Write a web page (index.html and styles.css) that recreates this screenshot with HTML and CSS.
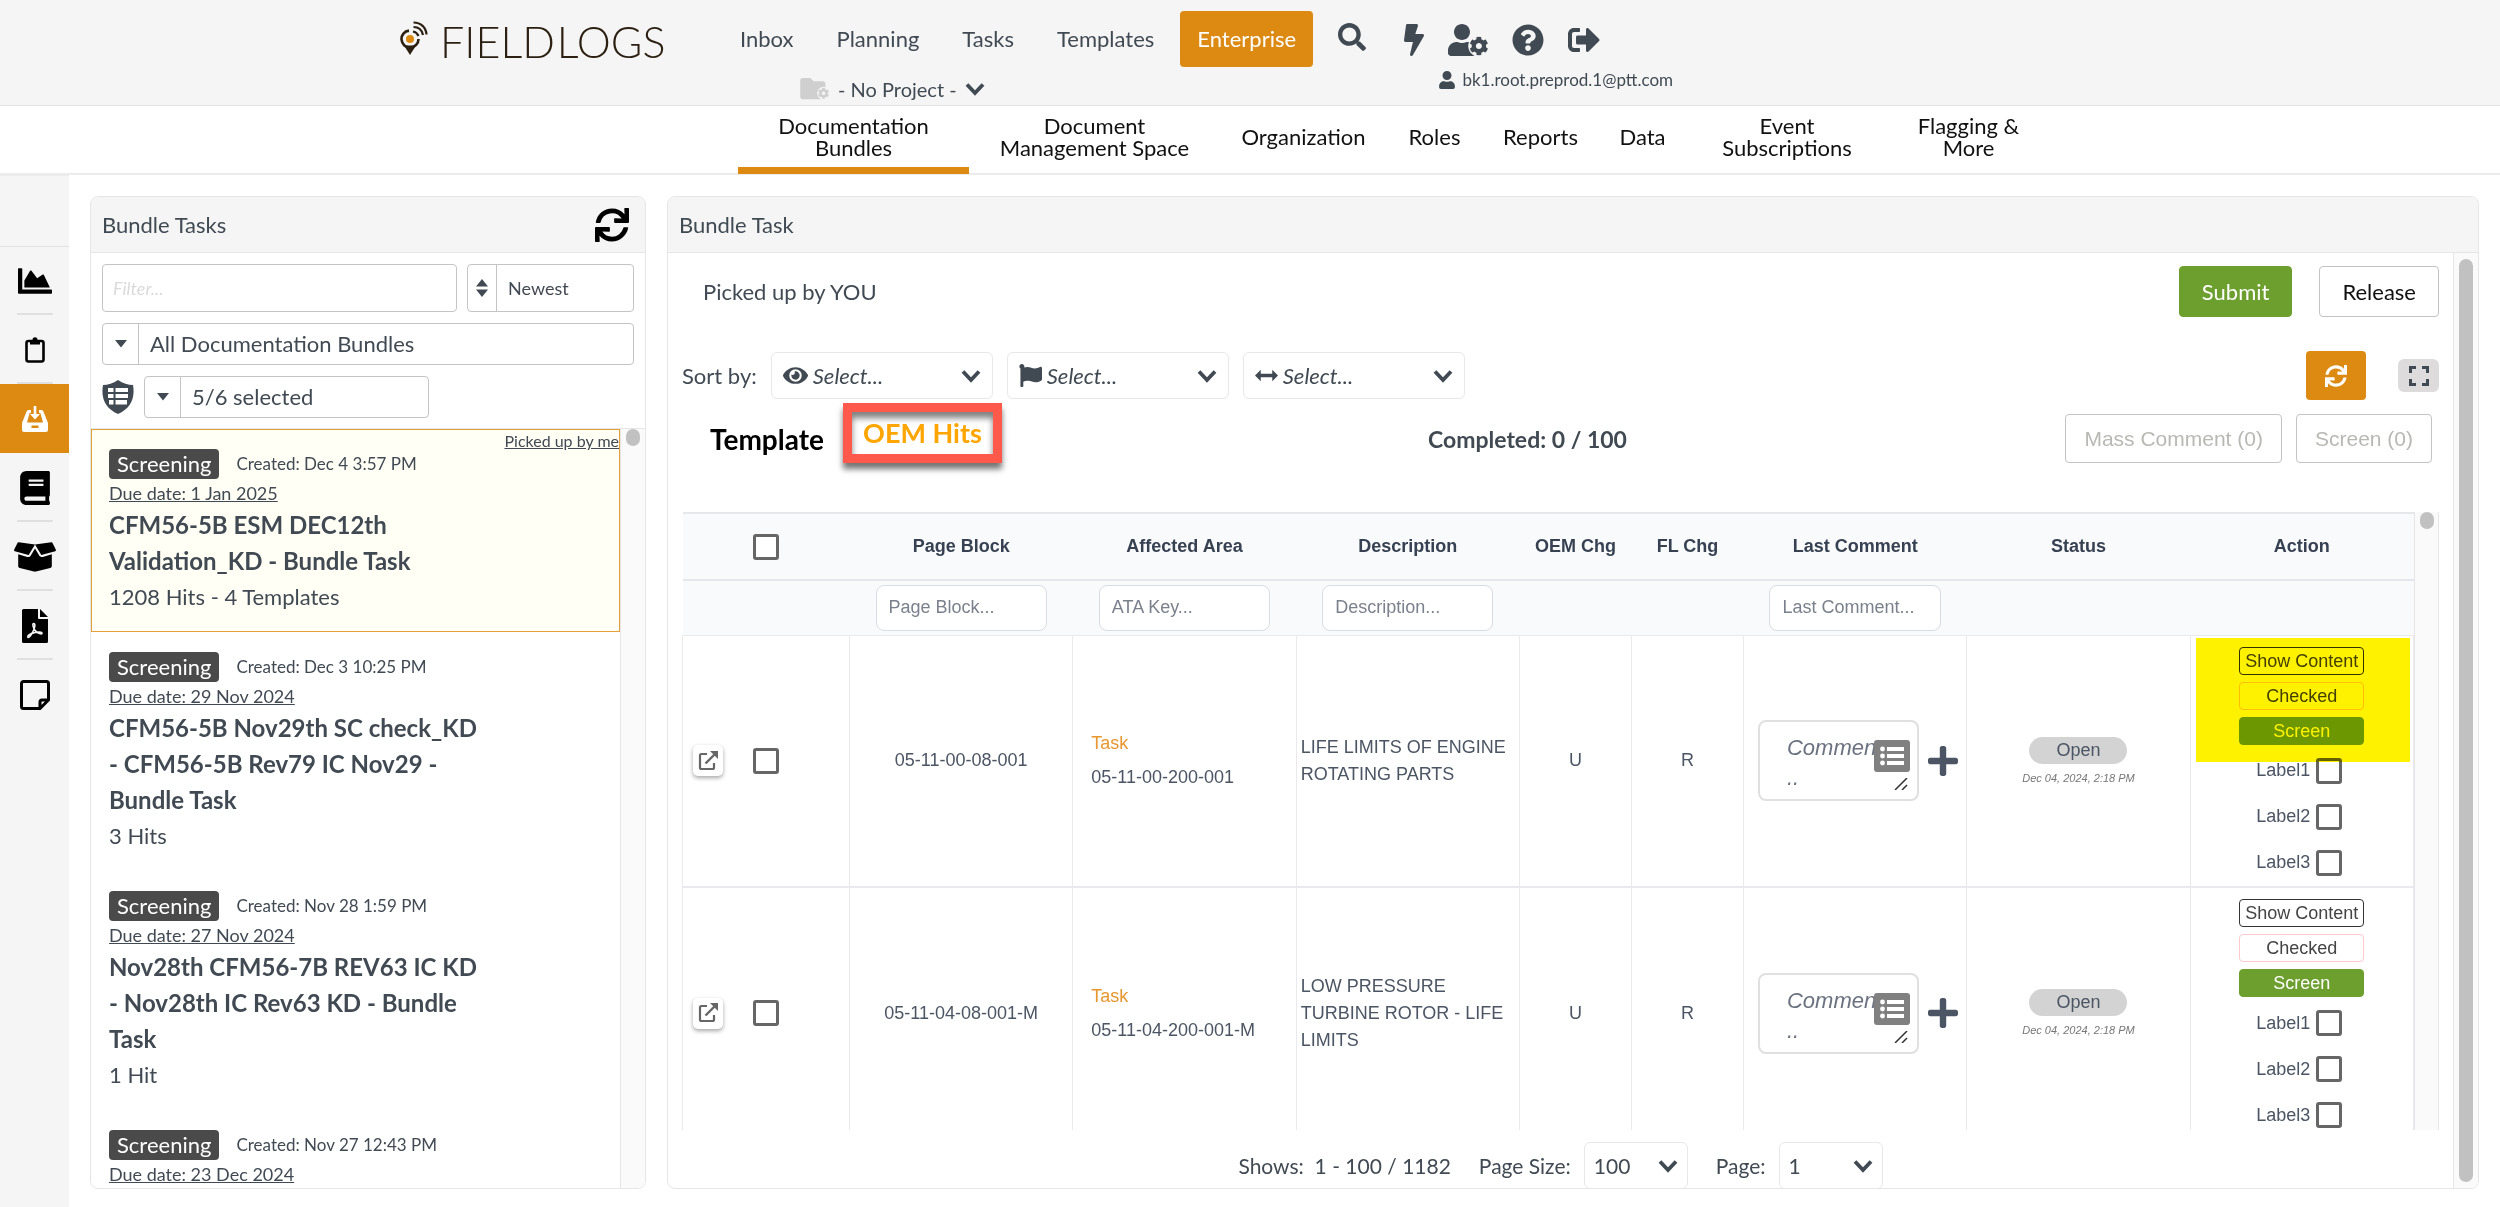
FILE: index.html
```html
<!DOCTYPE html>
<html lang="en">
<head>
    <meta charset="UTF-8">
    <meta name="viewport" content="width=device-width, initial-scale=1.0">
    <title>Field Logs - Documentation Bundles</title>
    <link rel="stylesheet" href="styles.css">
</head>
<body>
    <!-- Icon sprite -->
    <svg class="sprite" aria-hidden="true">
        <symbol id="i-search" viewBox="0 0 512 512"><path d="M505 442.7L405.3 343c-4.5-4.5-10.6-7-17-7H372c27.6-35.3 44-79.7 44-128C416 93.1 322.9 0 208 0S0 93.1 0 208s93.1 208 208 208c48.3 0 92.7-16.4 128-44v16.3c0 6.4 2.5 12.5 7 17l99.7 99.7c9.4 9.4 24.6 9.4 33.9 0l28.3-28.3c9.4-9.4 9.4-24.6.1-34zM208 336c-70.7 0-128-57.2-128-128 0-70.7 57.2-128 128-128 70.7 0 128 57.2 128 128 0 70.7-57.2 128-128 128z"/></symbol>
        <symbol id="i-bolt" viewBox="0 0 320 512"><path d="M296 160H180.6l42.6-129.8C227.2 15 215.7 0 200 0H56C44 0 33.8 8.9 32.2 20.8l-32 240C-1.7 275.2 9.5 288 24 288h118.7L96.6 482.5c-3.6 15.2 8 29.5 23.3 29.5 8.4 0 16.4-4.4 20.8-12l176-304c9.3-15.9-2.2-36-20.7-36z"/></symbol>
        <symbol id="i-user" viewBox="0 0 448 512"><path d="M224 256c70.7 0 128-57.3 128-128S294.7 0 224 0 96 57.3 96 128s57.3 128 128 128zm89.6 32h-16.7c-22.2 10.2-46.9 16-72.9 16s-50.6-5.8-72.9-16h-16.7C60.2 288 0 348.2 0 422.4V464c0 26.5 21.5 48 48 48h352c26.5 0 48-21.5 48-48v-41.6c0-74.2-60.2-134.4-134.4-134.4z"/></symbol>
        <symbol id="i-cog" viewBox="0 0 512 512"><path d="M487.4 315.7l-42.6-24.6c4.3-23.2 4.3-47 0-70.2l42.6-24.6c4.9-2.8 7.1-8.6 5.5-14-11.1-35.6-30-67.8-54.7-94.6-3.8-4.1-10-5.1-14.8-2.3L380.8 110c-17.9-15.4-38.5-27.3-60.8-35.1V25.8c0-5.6-3.9-10.5-9.4-11.7-36.7-8.2-74.3-7.8-109.2 0-5.5 1.2-9.4 6.1-9.4 11.7V75c-22.2 7.9-42.8 19.8-60.8 35.1L88.7 85.5c-4.9-2.8-11-1.9-14.8 2.3-24.7 26.7-43.6 58.9-54.7 94.6-1.7 5.4.6 11.2 5.5 14L67.3 221c-4.3 23.2-4.3 47 0 70.2l-42.6 24.6c-4.9 2.8-7.1 8.6-5.5 14 11.1 35.6 30 67.8 54.7 94.6 3.8 4.1 10 5.1 14.8 2.3l42.6-24.6c17.9 15.4 38.5 27.3 60.8 35.1v49.2c0 5.6 3.9 10.5 9.4 11.7 36.7 8.2 74.3 7.8 109.2 0 5.5-1.2 9.4-6.1 9.4-11.7v-49.2c22.2-7.9 42.8-19.8 60.8-35.1l42.6 24.6c4.9 2.8 11 1.9 14.8-2.3 24.7-26.7 43.6-58.9 54.7-94.6 1.5-5.5-.7-11.3-5.6-14.1zM256 336c-44.1 0-80-35.9-80-80s35.9-80 80-80 80 35.9 80 80-35.9 80-80 80z"/></symbol>
        <symbol id="i-user-cog" viewBox="0 0 640 512"><use href="#i-user" width="448" height="512"/><circle cx="496" cy="352" r="172" fill="#f5f5f5"/><use href="#i-cog" x="340" y="198" width="308" height="308"/></symbol>
        <symbol id="i-folder-cog" viewBox="0 0 600 448"><path d="M464 64H272l-64-64H48C21 0 0 21 0 48v336c0 27 21 48 48 48h416c27 0 48-21 48-48V112c0-27-21-48-48-48z"/><circle cx="474" cy="310" r="130" fill="#f5f5f5"/><use href="#i-cog" x="358" y="194" width="232" height="232"/></symbol>
        <symbol id="i-question" viewBox="0 0 512 512"><path d="M504 256c0 136.997-111.043 248-248 248S8 392.997 8 256C8 119.083 119.043 8 256 8s248 111.083 248 248zM262.655 90c-54.497 0-89.255 22.957-116.549 63.758-3.536 5.286-2.353 12.415 2.715 16.258l34.699 26.31c5.205 3.947 12.621 3.008 16.665-2.122 17.864-22.658 30.113-35.797 57.303-35.797 20.429 0 45.698 13.148 45.698 32.958 0 14.976-12.363 22.667-32.534 33.976C247.128 238.528 216 254.941 216 296v4c0 6.627 5.373 12 12 12h56c6.627 0 12-5.373 12-12v-1.333c0-28.462 83.186-29.647 83.186-106.667 0-58.002-60.165-102-116.531-102zM256 338c-25.365 0-46 20.635-46 46 0 25.364 20.635 46 46 46s46-20.636 46-46c0-25.365-20.635-46-46-46z"/></symbol>
        <symbol id="i-signout" viewBox="0 0 512 512"><path d="M497 273L329 441c-15 15-41 4.5-41-17v-96H152c-13.3 0-24-10.7-24-24v-96c0-13.3 10.7-24 24-24h136V88c0-21.4 25.9-32 41-17l168 168c9.3 9.4 9.3 24.6 0 34zM192 436v-40c0-6.6-5.4-12-12-12H96c-17.7 0-32-14.3-32-32V160c0-17.7 14.3-32 32-32h84c6.6 0 12-5.4 12-12V76c0-6.6-5.4-12-12-12H96c-53 0-96 43-96 96v192c0 53 43 96 96 96h84c6.6 0 12-5.4 12-12z"/></symbol>
        <symbol id="i-sync" viewBox="0 0 512 512"><path d="M440.65 12.57l4 82.77A247.16 247.16 0 0 0 255.83 8C134.73 8 33.91 94.92 12.29 209.82A12 12 0 0 0 24.09 224h49.05a12 12 0 0 0 11.67-9.26 175.91 175.91 0 0 1 317-56.94l-101.46-4.86a12 12 0 0 0-12.57 12v47.41a12 12 0 0 0 12 12H500a12 12 0 0 0 12-12V12a12 12 0 0 0-12-12h-47.37a12 12 0 0 0-11.98 12.57zM255.83 432a175.61 175.61 0 0 1-146-77.8l101.8 4.87a12 12 0 0 0 12.57-12v-47.4a12 12 0 0 0-12-12H12a12 12 0 0 0-12 12V500a12 12 0 0 0 12 12h47.35a12 12 0 0 0 12-12.6l-4.15-82.57A247.17 247.17 0 0 0 255.83 504c121.11 0 221.93-86.92 243.55-201.82a12 12 0 0 0-11.8-14.18h-49.05a12 12 0 0 0-11.67 9.26A175.86 175.86 0 0 1 255.83 432z"/></symbol>
        <symbol id="i-chart" viewBox="0 0 512 512"><path d="M500 384c6.6 0 12 5.4 12 12v40c0 6.6-5.4 12-12 12H12c-6.6 0-12-5.4-12-12V76c0-6.6 5.4-12 12-12h40c6.6 0 12 5.4 12 12v308h436zM372.7 159.5L288 216l-85.3-113.7c-5.1-6.8-15.5-6.3-19.9 1L96 248v104h384l-89.9-187.8c-3.2-6.5-11.4-8.7-17.4-4.7z"/></symbol>
        <symbol id="i-clipboard" viewBox="0 0 20 27"><rect x="1.5" y="5" width="17" height="20.5" rx="2" fill="none" stroke="currentColor" stroke-width="2.6"/><path d="M5 4h2.500a2.500 2.800 0 0 1 5 0H15v4.500H5z"/></symbol>
        <symbol id="i-inbox" viewBox="0 0 26 26"><path fill-rule="evenodd" d="M6.500 4H9v3H7.600L5 16.500h16L18.400 7H17V4h2.500a2 2 0 0 1 1.900 1.500L26 17v7a2 2 0 0 1-2 2H2a2 2 0 0 1-2-2v-7L4.600 5.500A2 2 0 0 1 6.500 4zM9.500 19.500V22h7v-2.500z"/><path d="M11.700 0h2.600v8h3.700l-5 5.500L8 8h3.700z"/></symbol>
        <symbol id="i-book" viewBox="0 0 448 512"><path d="M448 360V24c0-13.300-10.700-24-24-24H96C43 0 0 43 0 96v320c0 53 43 96 96 96h328c13.300 0 24-10.700 24-24v-16c0-7.500-3.500-14.300-8.900-18.700-4.200-15.400-4.200-59.300 0-74.700 5.400-4.300 8.900-11.100 8.900-18.600zM128 134c0-3.300 2.700-6 6-6h212c3.300 0 6 2.700 6 6v20c0 3.300-2.700 6-6 6H134c-3.300 0-6-2.700-6-6v-20zm0 64c0-3.300 2.700-6 6-6h212c3.300 0 6 2.700 6 6v20c0 3.300-2.700 6-6 6H134c-3.300 0-6-2.700-6-6v-20zm253.400 250H96c-17.700 0-32-14.300-32-32 0-17.600 14.400-32 32-32h285.400c-1.900 17.100-1.900 46.900 0 64z"/></symbol>
        <symbol id="i-box" viewBox="0 0 640 512"><path d="M425.700 256c-16.900 0-32.800-9-41.400-23.400L320 126l-64.200 106.600c-8.700 14.500-24.600 23.500-41.500 23.500-4.500 0-9-.6-13.300-1.900L64 215v178c0 14.700 10 27.500 24.200 31l216.200 54.100c10.200 2.500 20.900 2.500 31 0L551.800 424c14.200-3.600 24.200-16.400 24.200-31V215l-137 39.100c-4.300 1.300-8.800 1.900-13.300 1.900zm212.600-112.200L586.800 41c-3.100-6.200-9.800-9.800-16.700-8.900L320 64l91.700 152.100c3.800 6.300 11.400 9.300 18.500 7.300l197.900-56.500c9.900-2.900 14.700-13.900 10.200-23.100zM53.200 41L1.700 143.800c-4.600 9.200.3 20.200 10.100 23l197.900 56.500c7.100 2 14.700-1 18.500-7.300L320 64 69.800 32.100c-6.900-.8-13.500 2.700-16.600 8.900z"/></symbol>
        <symbol id="i-pdf" viewBox="0 0 26 34"><path d="M1.500 0H16v9a1 1 0 0 0 1 1h9v22.500a1.500 1.500 0 0 1-1.500 1.500h-23A1.500 1.500 0 0 1 0 32.500v-31A1.500 1.500 0 0 1 1.500 0z"/><path d="M18 0l8 8h-8z"/><path d="M11.500 14.500c2.500 0 1 5-.5 8-1.500 3.500-4 6.500-5 5.800-1.500-1.300 3-4 6.500-4.700 3-.8 7.500-1 7.500.6 0 2-4.500-.2-6.500-2.300-2-2-3.500-7.400-2-7.400z" fill="none" stroke="#f5f5f5" stroke-width="1.600"/></symbol>
        <symbol id="i-note" viewBox="0 0 30 30"><path d="M3.500 1.500h23a2 2 0 0 1 2 2V20L20 28.500H3.500a2 2 0 0 1-2-2v-23a2 2 0 0 1 2-2zM28 20h-6a2 2 0 0 0-2 2v6" fill="none" stroke="currentColor" stroke-width="3"/></symbol>
        <symbol id="i-shield" viewBox="0 0 32 34"><path d="M16 0c5 3.500 10 5 15 5 2.500 14-3 24-15 29C4 29 -1.500 19 1 5c5 0 10-1.500 15-5z"/><path d="M6 8h20v4H6zM6 14h20v4H6zM7 20h18v4.500H7z" fill="#fff"/><path d="M12.500 7v18" stroke="#414a53" stroke-width="2"/></symbol>
        <symbol id="i-eye" viewBox="0 0 576 512"><path d="M572.520 241.400C518.290 135.590 410.930 64 288 64S57.680 135.640 3.480 241.410a32.350 32.350 0 0 0 0 29.190C57.710 376.410 165.070 448 288 448s230.320-71.640 284.520-177.410a32.350 32.350 0 0 0 0-29.190zM288 400a144 144 0 1 1 144-144 143.930 143.930 0 0 1-144 144zm0-240a95.310 95.310 0 0 0-25.310 3.790 47.850 47.850 0 0 1-66.900 66.900A95.780 95.780 0 1 0 288 160z"/></symbol>
        <symbol id="i-flag" viewBox="0 0 512 512"><path d="M349.565 98.783C295.978 98.783 251.721 64 184.348 64c-24.955 0-47.309 4.384-68.045 12.013a55.947 55.947 0 0 0 3.586-23.562C118.117 24.015 94.806 1.206 66.338.048 34.345-1.254 8 24.296 8 56c0 19.026 9.497 35.825 24 45.945V488c0 13.255 10.745 24 24 24h16c13.255 0 24-10.745 24-24v-94.400c28.311-12.064 63.582-22.122 114.435-22.122 53.588 0 97.844 34.783 165.217 34.783 48.169 0 86.667-16.294 122.505-40.858C506.840 359.452 512 349.571 512 339.045v-243.100c0-23.393-24.269-38.870-45.485-29.016-34.338 15.948-76.454 31.854-116.950 31.854z"/></symbol>
        <symbol id="i-arrows" viewBox="0 0 24 12"><path d="M0 6l6-6v4.300h12V0l6 6-6 6V7.700H6V12z"/></symbol>
        <symbol id="i-chevron" viewBox="0 0 20 14"><path d="M2 2.500l8 8.500 8-8.500" fill="none" stroke="currentColor" stroke-width="3.800"/></symbol>
        <symbol id="i-caret" viewBox="0 0 12 8"><path d="M0 0h12L6 7.500z"/></symbol>
        <symbol id="i-sort" viewBox="0 0 12 18"><path d="M0 7.500h12L6 0zM0 10.500h12L6 18z"/></symbol>
        <symbol id="i-expand" viewBox="0 0 20 20"><path d="M1.500 7V1.500H7M13 1.500h5.500V7M18.500 13v5.500H13M7 18.500H1.500V13" fill="none" stroke="currentColor" stroke-width="3"/></symbol>
        <symbol id="i-external" viewBox="0 0 20 20"><path d="M9 3H3.500A1.500 1.500 0 0 0 2 4.500v12A1.500 1.500 0 0 0 3.500 18h11a1.500 1.500 0 0 0 1.500-1.500V12" fill="none" stroke="currentColor" stroke-width="2.200"/><path d="M7.500 12.500L17 3" stroke="currentColor" stroke-width="2.400"/><path d="M12 0h8v8z"/></symbol>
        <symbol id="i-list" viewBox="0 0 36 32"><rect width="36" height="32" rx="3" fill="#808080"/><path d="M13 7h17v4H13zM13 14h17v4H13zM13 21h17v4H13z" fill="#fff"/><circle cx="8.500" cy="9" r="2.400" fill="#fff"/><circle cx="8.500" cy="16" r="2.400" fill="#fff"/><circle cx="8.500" cy="23" r="2.400" fill="#fff"/></symbol>
        <symbol id="i-plus" viewBox="0 32 448 448"><path d="M416 208H272V64c0-17.670-14.330-32-32-32h-32c-17.670 0-32 14.330-32 32v144H32c-17.670 0-32 14.330-32 32v32c0 17.670 14.330 32 32 32h144v144c0 17.670 14.330 32 32 32h32c17.670 0 32-14.330 32-32V304h144c17.670 0 32-14.330 32-32v-32c0-17.670-14.330-32-32-32z"/></symbol>
        <symbol id="i-grip" viewBox="0 0 14 12"><path d="M1 12L13 0M8 12l5-5" fill="none" stroke="#333" stroke-width="1.500"/></symbol>
        <symbol id="i-pin" viewBox="0 0 28 34"><path d="M10 34L4 24.500h12z" fill="#2b2012"/><path d="M9 9.600a8.500 8.500 0 1 0 9.500 8.400" fill="none" stroke="#2b2012" stroke-width="2.600"/><circle cx="10" cy="18" r="4" fill="#dd8a13"/><path d="M13 10.500c3 .5 4.500 2 5.500 4.500M13.500 6c5 0 8.500 3 9.500 8M13.500 1.500c7.500 0 12.500 5 13 12" fill="none" stroke="#2b2012" stroke-width="2.200"/></symbol>
    </svg>

    <header class="topbar">
        <a class="logo" href="#">
            <svg class="pin"><use href="#i-pin"/></svg>
            <span>FIELD</span><span>LOGS</span>
        </a>
        <div class="topbar-main">
            <nav class="mainnav">
                <a href="#">Inbox</a>
                <a href="#">Planning</a>
                <a href="#">Tasks</a>
                <a href="#">Templates</a>
                <a href="#" class="active">Enterprise</a>
            </nav>
            <button class="project" type="button">
                <svg class="folder"><use href="#i-folder-cog"/></svg>
                - No Project -
                <svg class="chevron"><use href="#i-chevron"/></svg>
            </button>
        </div>
        <div class="topbar-tools">
            <div class="tools">
                <button type="button" aria-label="Search" class="tool-search"><svg class="ic28"><use href="#i-search"/></svg></button>
                <button type="button" aria-label="Activity"><svg class="bolt"><use href="#i-bolt"/></svg></button>
                <button type="button" aria-label="User settings"><svg class="usercog"><use href="#i-user-cog"/></svg></button>
                <button type="button" aria-label="Help"><svg class="ic32"><use href="#i-question"/></svg></button>
                <button type="button" aria-label="Sign out"><svg class="ic32"><use href="#i-signout"/></svg></button>
            </div>
            <div class="account"><svg class="user"><use href="#i-user"/></svg>bk1.root.preprod.1@ptt.com</div>
        </div>
    </header>

    <nav class="subnav">
        <a href="#" class="active">Documentation<br>Bundles</a>
        <a href="#">Document<br>Management Space</a>
        <a href="#">Organization</a>
        <a href="#">Roles</a>
        <a href="#">Reports</a>
        <a href="#">Data</a>
        <a href="#">Event<br>Subscriptions</a>
        <a href="#">Flagging &amp;<br>More</a>
    </nav>

    <div class="layout">
        <nav class="rail">
            <a href="#" aria-label="Dashboard"><svg class="ic34"><use href="#i-chart"/></svg></a>
            <a href="#" aria-label="Tasks"><svg class="clipboard"><use href="#i-clipboard"/></svg></a>
            <a href="#" aria-label="Bundles" class="active"><svg class="ic26"><use href="#i-inbox"/></svg></a>
            <a href="#" aria-label="Manuals"><svg class="ic34"><use href="#i-book"/></svg></a>
            <a href="#" aria-label="Packages"><svg class="box"><use href="#i-box"/></svg></a>
            <a href="#" aria-label="PDF"><svg class="ic34"><use href="#i-pdf"/></svg></a>
            <a href="#" aria-label="Notes"><svg class="ic30"><use href="#i-note"/></svg></a>
        </nav>

        <!-- Bundle task list -->
        <section class="panel tasks">
            <div class="panel-head">
                <h2>Bundle Tasks</h2>
                <button type="button" class="plain" aria-label="Refresh"><svg class="ic34"><use href="#i-sync"/></svg></button>
            </div>
            <div class="filters">
                <div class="filter-row">
                    <input class="filter-text" type="text" placeholder="Filter..." aria-label="Filter">
                    <div class="combo combo-sort">
                        <span class="combo-icon"><svg class="sort"><use href="#i-sort"/></svg></span>
                        <select aria-label="Order"><option>Newest</option></select>
                    </div>
                </div>
                <div class="combo">
                    <span class="combo-icon"><svg class="caret"><use href="#i-caret"/></svg></span>
                    <select aria-label="Bundles"><option>All Documentation Bundles</option></select>
                </div>
                <div class="filter-row">
                    <svg class="shield"><use href="#i-shield"/></svg>
                    <div class="combo combo-state">
                        <span class="combo-icon"><svg class="caret"><use href="#i-caret"/></svg></span>
                        <select aria-label="States"><option>5/6 selected</option></select>
                    </div>
                </div>
            </div>
            <div class="list-wrap">
                <div class="list">
                    <article class="task selected">
                        <span class="mine">Picked up by me</span>
                        <div class="task-top"><span class="badge">Screening</span><span>Created: Dec 4 3:57 PM</span></div>
                        <div class="due">Due date: 1 Jan 2025</div>
                        <h3>CFM56-5B ESM DEC12th Validation_KD - Bundle Task</h3>
                        <p>1208 Hits - 4 Templates</p>
                    </article>
                    <article class="task">
                        <div class="task-top"><span class="badge">Screening</span><span>Created: Dec 3 10:25 PM</span></div>
                        <div class="due">Due date: 29 Nov 2024</div>
                        <h3>CFM56-5B Nov29th SC check_KD - CFM56-5B Rev79 IC Nov29 - Bundle Task</h3>
                        <p>3 Hits</p>
                    </article>
                    <article class="task">
                        <div class="task-top"><span class="badge">Screening</span><span>Created: Nov 28 1:59 PM</span></div>
                        <div class="due">Due date: 27 Nov 2024</div>
                        <h3>Nov28th CFM56-7B REV63 IC KD - Nov28th IC Rev63 KD - Bundle Task</h3>
                        <p>1 Hit</p>
                    </article>
                    <article class="task">
                        <div class="task-top"><span class="badge">Screening</span><span>Created: Nov 27 12:43 PM</span></div>
                        <div class="due">Due date: 23 Dec 2024</div>
                    </article>
                </div>
                <div class="track"><div class="thumb thumb-short"></div></div>
            </div>
        </section>

        <!-- Selected task -->
        <section class="panel detail">
            <div class="panel-head"><h2>Bundle Task</h2></div>
            <div class="detail-wrap">
                <div class="detail-body">
                    <div class="row pick-row">
                        <span class="grow">Picked up by YOU</span>
                        <button type="button" class="btn btn-green">Submit</button>
                        <button type="button" class="btn">Release</button>
                    </div>
                    <div class="row sort-row">
                        <span>Sort by:</span>
                        <div class="picker"><svg class="ic25"><use href="#i-eye"/></svg><select aria-label="Sort by view"><option>Select...</option></select><svg class="chevron"><use href="#i-chevron"/></svg></div>
                        <div class="picker"><svg class="ic23"><use href="#i-flag"/></svg><select aria-label="Sort by flag"><option>Select...</option></select><svg class="chevron"><use href="#i-chevron"/></svg></div>
                        <div class="picker"><svg class="ic23"><use href="#i-arrows"/></svg><select aria-label="Sort by width"><option>Select...</option></select><svg class="chevron"><use href="#i-chevron"/></svg></div>
                        <span class="grow"></span>
                        <button type="button" class="btn-orange" aria-label="Reload"><svg class="ic22"><use href="#i-sync"/></svg></button>
                        <button type="button" class="btn-expand" aria-label="Full screen"><svg class="ic20"><use href="#i-expand"/></svg></button>
                    </div>
                    <div class="row title-row">
                        <div class="titles">
                            <h2>Template</h2>
                            <span class="bar">|</span>
                            <span class="marked">OEM Hits</span>
                        </div>
                        <strong class="grow completed">Completed: 0 / 100</strong>
                        <button type="button" class="btn btn-off" disabled>Mass Comment (0)</button>
                        <button type="button" class="btn btn-off" disabled>Screen (0)</button>
                    </div>

                    <div class="table-wrap">
                        <div class="table-scroll">
                            <table>
                                <colgroup>
                                    <col class="c-select"><col class="c-wide"><col class="c-wide"><col class="c-wide"><col class="c-chg"><col class="c-chg"><col class="c-wide"><col class="c-wide"><col class="c-wide">
                                </colgroup>
                                <thead>
                                    <tr>
                                        <th class="sel"><input type="checkbox" aria-label="Select all"></th>
                                        <th>Page Block</th>
                                        <th>Affected Area</th>
                                        <th>Description</th>
                                        <th>OEM Chg</th>
                                        <th>FL Chg</th>
                                        <th>Last Comment</th>
                                        <th>Status</th>
                                        <th>Action</th>
                                    </tr>
                                    <tr class="search">
                                        <td></td>
                                        <td><input type="text" placeholder="Page Block..." aria-label="Page Block"></td>
                                        <td><input type="text" placeholder="ATA Key..." aria-label="ATA Key"></td>
                                        <td><input type="text" placeholder="Description..." aria-label="Description"></td>
                                        <td></td>
                                        <td></td>
                                        <td><input type="text" placeholder="Last Comment..." aria-label="Last Comment"></td>
                                        <td></td>
                                        <td></td>
                                    </tr>
                                </thead>
                                <tbody>
                                    <tr>
                                        <td><div class="pick"><button type="button" class="open" aria-label="Open"><svg class="ic20"><use href="#i-external"/></svg></button><input type="checkbox" aria-label="Select 05-11-00-08-001"></div></td>
                                        <td>05-11-00-08-001</td>
                                        <td class="area"><a href="#">Task</a>05-11-00-200-001</td>
                                        <td class="desc">LIFE LIMITS OF ENGINE ROTATING PARTS</td>
                                        <td>U</td>
                                        <td>R</td>
                                        <td>
                                            <div class="comment">
                                                <div class="comment-box"><textarea placeholder="Comment..." aria-label="Comment"></textarea><svg class="list-ic"><use href="#i-list"/></svg><svg class="grip"><use href="#i-grip"/></svg></div>
                                                <button type="button" class="plain" aria-label="Add comment"><svg class="ic30"><use href="#i-plus"/></svg></button>
                                            </div>
                                        </td>
                                        <td><span class="pill">Open</span><span class="stamp">Dec 04, 2024, 2:18 PM</span></td>
                                        <td class="actions">
                                            <div class="highlight"></div>
                                            <button type="button" class="act act-show">Show Content</button>
                                            <button type="button" class="act act-checked">Checked</button>
                                            <button type="button" class="act act-screen">Screen</button>
                                            <label>Label1<input type="checkbox"></label>
                                            <label>Label2<input type="checkbox"></label>
                                            <label>Label3<input type="checkbox"></label>
                                        </td>
                                    </tr>
                                    <tr>
                                        <td><div class="pick"><button type="button" class="open" aria-label="Open"><svg class="ic20"><use href="#i-external"/></svg></button><input type="checkbox" aria-label="Select 05-11-04-08-001-M"></div></td>
                                        <td>05-11-04-08-001-M</td>
                                        <td class="area"><a href="#">Task</a>05-11-04-200-001-M</td>
                                        <td class="desc">LOW PRESSURE TURBINE ROTOR - LIFE LIMITS</td>
                                        <td>U</td>
                                        <td>R</td>
                                        <td>
                                            <div class="comment">
                                                <div class="comment-box"><textarea placeholder="Comment..." aria-label="Comment"></textarea><svg class="list-ic"><use href="#i-list"/></svg><svg class="grip"><use href="#i-grip"/></svg></div>
                                                <button type="button" class="plain" aria-label="Add comment"><svg class="ic30"><use href="#i-plus"/></svg></button>
                                            </div>
                                        </td>
                                        <td><span class="pill">Open</span><span class="stamp">Dec 04, 2024, 2:18 PM</span></td>
                                        <td class="actions">
                                            <button type="button" class="act act-show">Show Content</button>
                                            <button type="button" class="act act-checked">Checked</button>
                                            <button type="button" class="act act-screen">Screen</button>
                                            <label>Label1<input type="checkbox"></label>
                                            <label>Label2<input type="checkbox"></label>
                                            <label>Label3<input type="checkbox"></label>
                                        </td>
                                    </tr>
                                </tbody>
                            </table>
                        </div>
                        <div class="track"><div class="thumb thumb-short"></div></div>
                    </div>

                    <div class="pager">
                        <span>Shows:&nbsp; 1 - 100 / 1182</span>
                        <label>Page Size: <span class="picker picker-small"><select><option>100</option></select><svg class="chevron"><use href="#i-chevron"/></svg></span></label>
                        <label>Page: <span class="picker picker-small"><select><option>1</option></select><svg class="chevron"><use href="#i-chevron"/></svg></span></label>
                    </div>
                </div>
                <div class="track"><div class="thumb thumb-long"></div></div>
            </div>
        </section>
    </div>
</body>
</html>
```

FILE: styles.css
```css
* {
    box-sizing: border-box;
}

body {
    margin: 0;
    height: 100vh;
    display: flex;
    flex-direction: column;
    overflow: hidden;
    background-color: #fff;
    color: #414a53;
    font-family: Lato, "Open Sans", sans-serif;
    font-size: 22px;
    line-height: 28px;
}

h2, h3, p {
    margin: 0;
    font-size: 22px;
    font-weight: normal;
}

a {
    color: inherit;
    text-decoration: none;
}

button, input, select, textarea {
    font: inherit;
    color: inherit;
}

button {
    padding: 0;
    border: none;
    background: none;
}

select {
    flex: 1;
    min-width: 0;
    border: none;
    background: none;
    appearance: none;
    outline: none;
}

svg {
    display: block;
    flex: none;
    fill: currentColor;
}

.sprite {
    position: absolute;
    width: 0;
    height: 0;
}

.ic20 { width: 20px; height: 20px; }
.ic22 { width: 22px; height: 22px; }
.ic23 { width: 23px; height: 23px; }
.ic25 { width: 25px; height: 25px; }
.ic26 { width: 26px; height: 26px; }
.ic28 { width: 28px; height: 28px; }
.ic30 { width: 30px; height: 30px; }
.ic32 { width: 32px; height: 32px; }
.ic34 { width: 34px; height: 34px; }
.chevron { width: 20px; height: 14px; }
.caret { width: 12px; height: 8px; }
.sort { width: 12px; height: 18px; }
.shield { width: 32px; height: 34px; }
.clipboard { width: 20px; height: 27px; }
.box { width: 42px; height: 34px; }
.bolt { width: 20px; height: 32px; }
.usercog { width: 40px; height: 32px; }
.user { width: 16px; height: 18px; }
.folder { width: 30px; height: 22px; color: #cfcfcf; }
.pin { width: 28px; height: 34px; }

.grow {
    flex: 1;
}

/* Top bar */
.topbar {
    flex: none;
    display: flex;
    height: 106px;
    padding-left: 16%;
    background-color: #f5f5f5;
    border-bottom: 1px solid #e3e3e3;
}

.logo {
    display: flex;
    align-items: center;
    width: 340px;
    height: 84px;
    color: #2b2012;
    font-size: 43px;
    font-weight: 300;
}

.logo .pin {
    margin: 0 12px 8px 0;
}

.logo span + span {
    margin-left: 2px;
}

.mainnav {
    display: flex;
    align-items: center;
    height: 66px;
    padding-top: 12px;
    gap: 43px;
}

.mainnav .active {
    padding: 14px 17px;
    margin-left: -17px;
    border-radius: 4px;
    background-color: #dd8a13;
    color: #fff;
}

.project {
    display: flex;
    align-items: center;
    gap: 8px;
    margin: 9px 0 0 60px;
    font-size: 20px;
}

.tools {
    display: flex;
    align-items: center;
    height: 68px;
    padding: 12px 0 0 25px;
    gap: 24px;
}

.tool-search {
    margin-right: 14px;
    padding-bottom: 6px;
}

.account {
    display: flex;
    gap: 7px;
    align-items: center;
    justify-content: flex-end;
    width: 360px;
    font-size: 17px;
    line-height: 24px;
}

/* Second navigation */
.subnav {
    flex: none;
    display: grid;
    grid-template-columns: 231px 251px 167px 95px 117px 87px 202px 161px;
    height: 69px;
    padding-left: 738px;
    border-bottom: 2px solid #ececec;
    color: #111;
    line-height: 22px;
    text-align: center;
}

.subnav a {
    display: flex;
    align-items: center;
    justify-content: center;
    border-bottom: 7px solid transparent;
    margin-bottom: -1px;
}

.subnav .active {
    border-color: #dd8a13;
}

.layout {
    flex: 1;
    min-height: 0;
    display: flex;
    padding-right: 21px;
}

/* Icon rail */
.rail {
    width: 69px;
    padding-top: 70px;
    background-color: #f5f5f5;
    color: #000;
    border-top: 1px solid #ececec;
}

.rail a {
    display: flex;
    align-items: center;
    justify-content: center;
    height: 69px;
    background: linear-gradient(#e0e0e0, #e0e0e0) bottom center / 36px 2px no-repeat;
}

.rail a:first-child {
    border-top: 1px solid #e3e3e3;
}

.rail a:last-child {
    background: none;
}

.rail .active {
    background: #dd8a13;
    color: #fff;
}

/* Panels */
.panel {
    display: flex;
    flex-direction: column;
    margin: 21px 0 18px 21px;
    border: 1px solid #e6e6e6;
    border-radius: 8px;
    overflow: hidden;
}

.tasks {
    width: 556px;
}

.detail {
    flex: 1;
    min-width: 0;
}

.panel-head {
    flex: none;
    display: flex;
    align-items: center;
    justify-content: space-between;
    height: 56px;
    padding: 0 16px 0 11px;
    background-color: #f5f5f5;
    border-bottom: 1px solid #e6e6e6;
}

.tasks .panel-head svg {
    color: #000;
}

.track {
    flex: none;
    width: 25px;
    padding: 0 5px;
    background-color: #fafafa;
    border-left: 1px solid #e6e6e6;
}

.thumb {
    width: 14px;
    border-radius: 7px;
    background-color: #c1c1c1;
}

.thumb-short {
    height: 17px;
}

.thumb-long {
    height: calc(100% - 12px);
    margin-top: 6px;
}

/* List filters */
.filters {
    display: flex;
    flex-direction: column;
    gap: 11px;
    padding: 11px 11px 10px;
    border-bottom: 1px solid #e6e6e6;
}

.filter-row {
    display: flex;
    align-items: center;
    gap: 10px;
}

.filter-text {
    flex: 1;
    min-width: 0;
    height: 48px;
    padding: 0 10px;
    border: 1px solid #c4c4c4;
    border-radius: 4px;
    font-size: 18px;
}

.filter-text::placeholder {
    color: #dadada;
    font-style: italic;
}

.combo {
    display: flex;
    height: 42px;
    border: 1px solid #c4c4c4;
    border-radius: 4px;
}

.combo select {
    padding: 0 11px;
}

.combo-icon {
    display: flex;
    align-items: center;
    justify-content: center;
    width: 36px;
    border-right: 1px solid #c4c4c4;
}

.combo-sort {
    width: 167px;
    height: 48px;
    font-size: 18px;
}

.combo-sort .combo-icon {
    width: 29px;
}

.combo-state {
    width: 285px;
}

/* Task list */
.list-wrap {
    flex: 1;
    min-height: 0;
    display: flex;
}

.list {
    flex: 1;
    overflow: hidden;
}

.task {
    position: relative;
    padding: 19px 135px 16px 17px;
    border: 1px solid transparent;
}

.task.selected {
    background-color: #fffff5;
    border-color: #e5a03c;
}

.mine {
    position: absolute;
    top: 0;
    right: 0;
    font-size: 16px;
    line-height: 22px;
    text-decoration: underline;
}

.task-top {
    display: flex;
    align-items: center;
    gap: 17px;
    font-size: 17px;
    white-space: nowrap;
}

.badge {
    padding: 1px 8px;
    border-radius: 4px;
    background-color: #4a4a4a;
    color: #fff;
    font-size: 22px;
}

.due {
    font-size: 18px;
    text-decoration: underline;
}

.task h3 {
    font-size: 24px;
    font-weight: bold;
    line-height: 36px;
}

.task p {
    line-height: 36px;
}

/* Task detail */
.detail-wrap {
    flex: 1;
    min-height: 0;
    display: flex;
}

.detail-body {
    flex: 1;
    min-width: 0;
    display: flex;
    flex-direction: column;
    padding: 13px 14px 0;
}

.row {
    flex: none;
    display: flex;
    align-items: center;
}

.pick-row {
    padding-left: 21px;
    gap: 27px;
}

.btn {
    height: 51px;
    padding: 0 22px;
    border: 1px solid #c4c4c4;
    border-radius: 4px;
    background-color: #fff;
    color: #111;
}

.btn-green {
    border-color: #6d9f2f;
    background-color: #6d9f2f;
    color: #fff;
}

.btn-off {
    height: 49px;
    padding: 0 18px;
    color: #b8b8b4;
    font-family: "Liberation Sans", Arial, sans-serif;
    font-size: 21px;
}

.sort-row {
    margin-top: 34px;
    gap: 14px;
}

.picker {
    display: flex;
    align-items: center;
    gap: 5px;
    width: 222px;
    height: 47px;
    padding: 0 11px;
    border: 1px solid #e8e8e8;
    border-radius: 6px;
    font-style: italic;
}

.picker-small {
    display: inline-flex;
    width: 104px;
    padding: 0 9px;
    font-style: normal;
}

.btn-orange {
    display: flex;
    align-items: center;
    justify-content: center;
    width: 60px;
    height: 49px;
    margin-right: 18px;
    border-radius: 4px;
    background-color: #dd8a13;
    color: #fff;
}

.btn-expand {
    display: flex;
    align-items: center;
    justify-content: center;
    width: 41px;
    height: 33px;
    border-radius: 6px;
    background-color: #dedbdd;
}

.title-row {
    height: 49px;
    margin-top: 14px;
    padding: 0 7px 0 28px;
    gap: 14px;
}

.titles {
    display: flex;
    align-items: center;
    width: 704px;
    font-weight: bold;
    font-size: 27px;
}

.titles h2 {
    width: 132px;
    color: #000;
    font-size: 28px;
    font-weight: bold;
}

.completed {
    font-size: 23px;
}

/* Red callout frame round the template name */
.marked {
    position: relative;
    z-index: 1;
    margin: -12px 0 0 -6px;
    padding: 7px 11px;
    border: 9px solid #ff594b;
    background-color: #fff;
    box-shadow: 0 6px 6px rgba(0, 0, 0, 0.55), inset 0 6px 6px rgba(0, 0, 0, 0.5);
    color: #ffa500;
}

/* Hits table */
.table-wrap {
    flex: 1;
    min-height: 0;
    display: flex;
    margin-top: 49px;
}

.table-wrap .track {
    border-right: 1px solid #e6e6e6;
}

.table-scroll {
    flex: 1;
    min-width: 0;
    overflow: hidden;
}

table {
    width: 100%;
    table-layout: fixed;
    border-collapse: collapse;
    color: #4b5563;
    font-family: "Liberation Sans", Arial, sans-serif;
    font-size: 18px;
    line-height: 27px;
    text-align: center;
}

.c-select { width: 167px; }
.c-chg { width: 112px; }

thead {
    background-color: #f8fafc;
    border-top: 2px solid #e5e7eb;
}

th {
    height: 67px;
    padding: 0;
    border-bottom: 2px solid #e5e7eb;
    color: #374151;
}

.search td {
    height: 55px;
    padding: 0 26px;
}

.search input {
    display: block;
    width: 100%;
    height: 46px;
    padding: 0 12px;
    border: 1px solid #d9dce3;
    border-radius: 8px;
    background-color: #fff;
    font-size: 18px;
}

.search input::placeholder {
    color: #7b818c;
}

tbody td {
    height: 252px;
    padding: 0;
    border: 1px solid #e9e9ee;
    border-bottom-width: 2px;
}

input[type="checkbox"] {
    appearance: none;
    display: block;
    width: 26px;
    height: 26px;
    margin: 0;
    border: 3px solid #666;
    border-radius: 3px;
    background-color: #fff;
}

.sel {
    padding-left: 70px;
}

.pick {
    display: flex;
    align-items: center;
    gap: 30px;
    padding-left: 10px;
}

.open {
    display: flex;
    align-items: center;
    justify-content: center;
    width: 30px;
    height: 31px;
    border-radius: 5px;
    background-color: #fff;
    box-shadow: 0 2px 4px rgba(0, 0, 0, 0.35);
    color: #666;
}

tbody .area {
    padding-left: 18px;
    text-align: left;
}

.area a {
    display: block;
    margin-bottom: 7px;
    color: #e8962e;
}

tbody .desc {
    padding: 0 4px;
    text-align: left;
}

.comment {
    display: flex;
    align-items: center;
    gap: 9px;
    padding-left: 14px;
}

.comment-box {
    position: relative;
    height: 81px;
}

.comment textarea {
    display: block;
    width: 161px;
    height: 81px;
    padding: 11px 27px;
    border: 2px solid #e0e0e0;
    border-radius: 8px;
    resize: none;
    overflow: hidden;
    font-size: 22px;
    line-height: 30px;
}

.comment textarea::placeholder {
    color: #6b7280;
    font-style: italic;
}

.list-ic {
    position: absolute;
    top: 20px;
    right: 9px;
    width: 36px;
    height: 32px;
}

.grip {
    position: absolute;
    right: 11px;
    bottom: 11px;
    width: 14px;
    height: 12px;
}

.pill {
    display: block;
    width: 98px;
    margin: 0 auto 7px;
    border-radius: 14px;
    background-color: #d3d3d3;
}

.stamp {
    display: block;
    color: #777;
    font-size: 11px;
    font-style: italic;
    line-height: 14px;
}

tbody .actions {
    position: relative;
    padding-top: 11px;
    vertical-align: top;
}

.highlight {
    position: absolute;
    top: 2px;
    left: 5px;
    right: 3px;
    height: 124px;
    background-color: #fff200;
    mix-blend-mode: multiply;
    pointer-events: none;
    z-index: 1;
}

.act {
    display: block;
    width: 125px;
    height: 28px;
    margin: 0 auto 7px;
    border: 1px solid #333;
    border-radius: 4px;
    color: #444;
    white-space: nowrap;
}

.act-checked {
    border-color: #ffc9cf;
}

.act-screen {
    border-color: #6d9f2f;
    background-color: #6d9f2f;
    color: #fff;
    margin-bottom: 3px;
}

.actions label {
    display: flex;
    align-items: center;
    justify-content: center;
    gap: 6px;
    height: 46px;
    padding-right: 5px;
}

/* Pager */
.pager {
    flex: none;
    display: flex;
    justify-content: center;
    gap: 28px;
    height: 58px;
    padding-top: 12px;
    font-size: 21px;
}

.pager > span {
    line-height: 47px;
}

.pager label {
    display: flex;
    align-items: center;
    gap: 13px;
    height: 47px;
}
```
